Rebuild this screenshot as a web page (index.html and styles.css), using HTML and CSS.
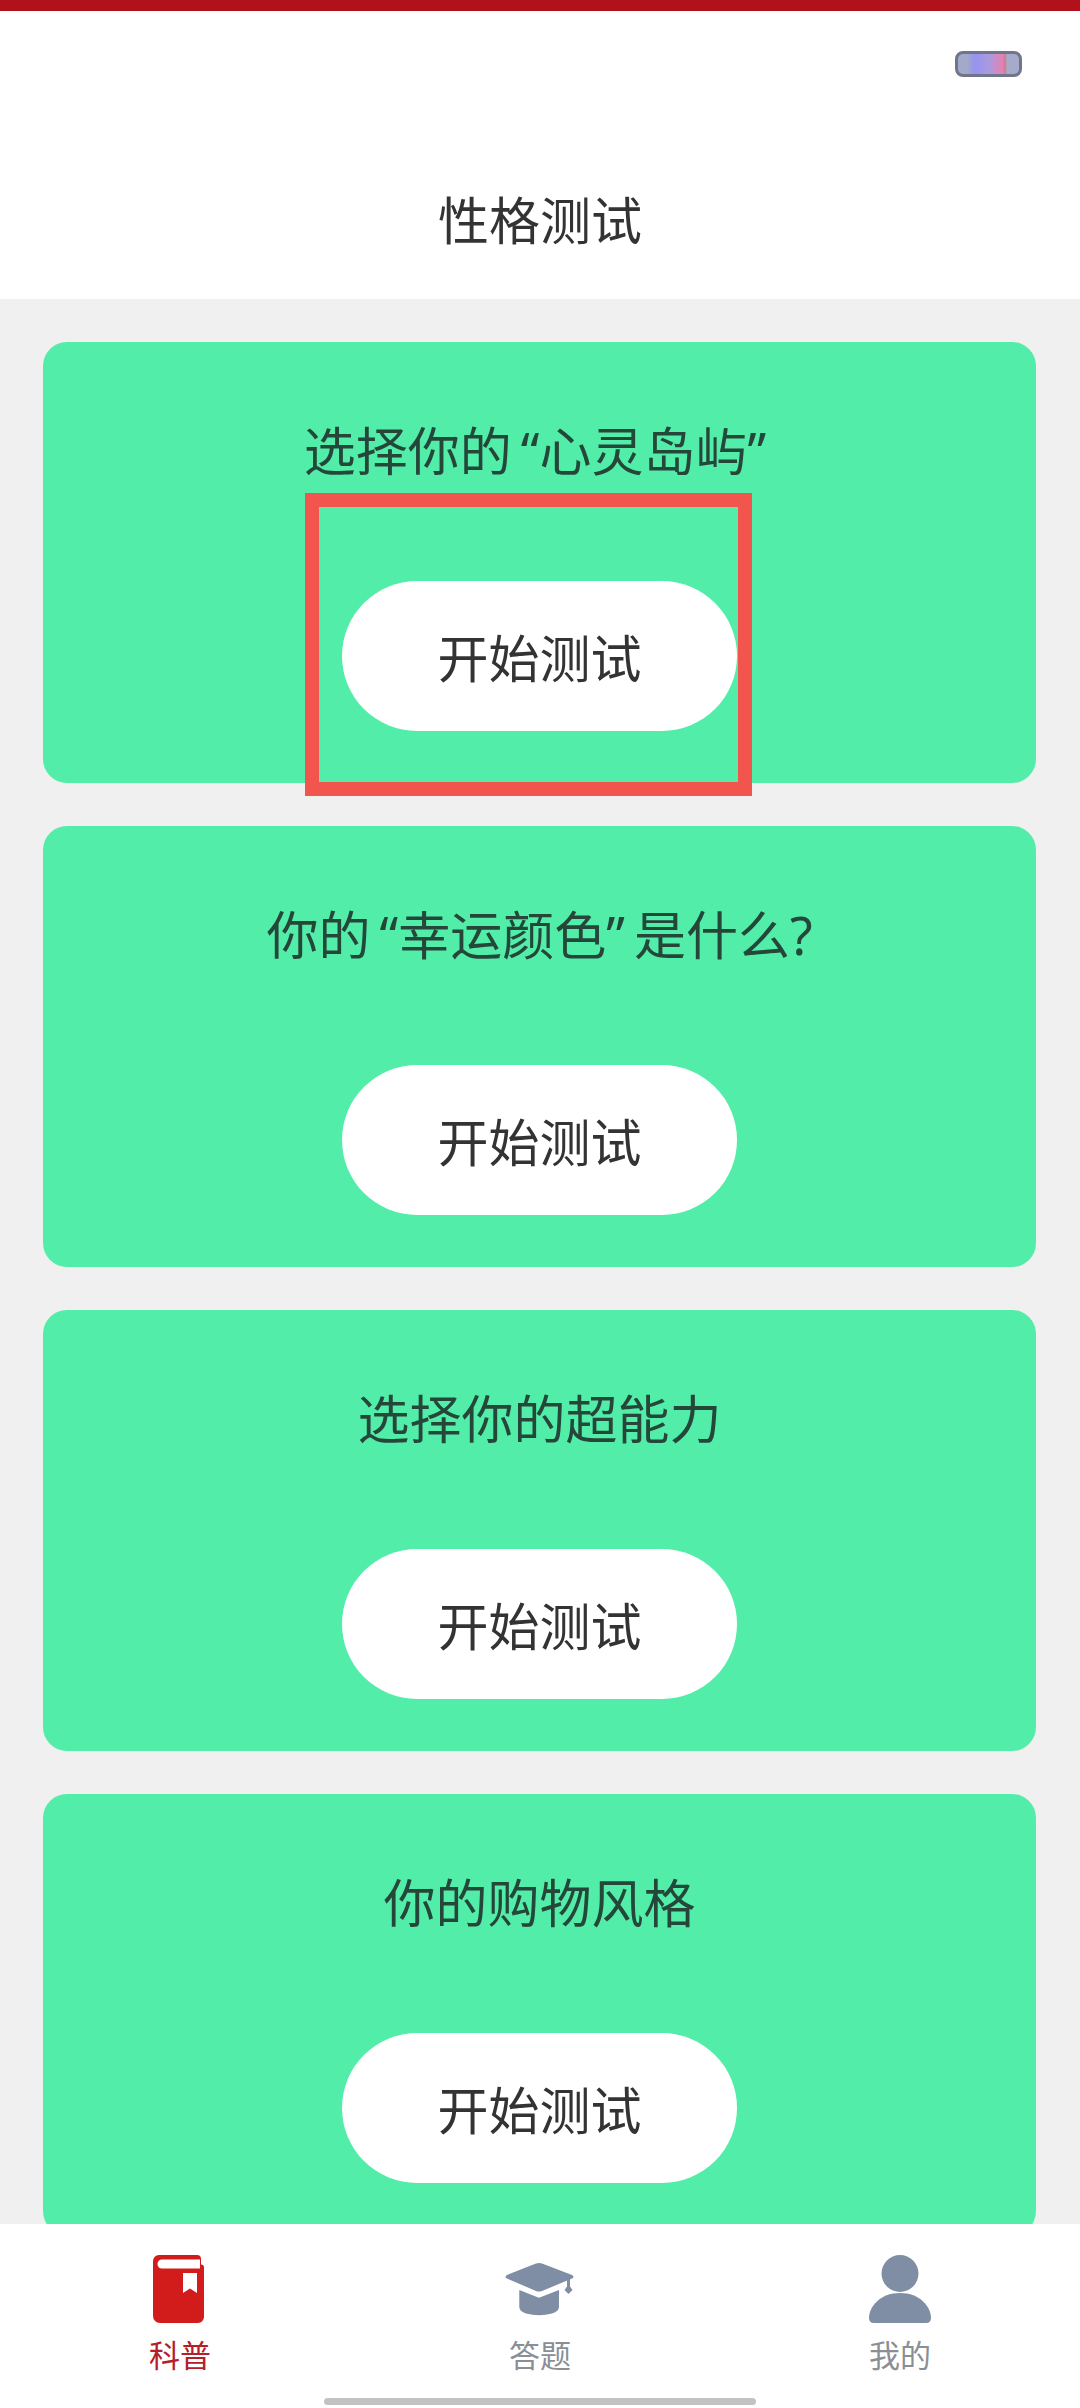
FILE: index.html
```html
<!DOCTYPE html>
<html lang="zh-CN">
<head>
<meta charset="utf-8">
<title>性格测试</title>
<link rel="stylesheet" href="styles.css">
</head>
<body>
<div class="app">
  <div class="status-strip"></div>
  <header class="header">
    <div class="pill"></div>
    <h1 class="header-title">性格测试</h1>
  </header>
  <main class="list">
    <section class="card">
      <h2 class="card-title">选择你的<span class="quoted">“心灵岛屿”</span></h2>
      <button class="start">开始测试</button>
      <div class="highlight"></div>
    </section>
    <section class="card">
      <h2 class="card-title">你的<span class="quoted">“幸运颜色”</span>是什么?</h2>
      <button class="start">开始测试</button>
    </section>
    <section class="card">
      <h2 class="card-title">选择你的超能力</h2>
      <button class="start">开始测试</button>
    </section>
    <section class="card">
      <h2 class="card-title">你的购物风格</h2>
      <button class="start">开始测试</button>
    </section>
  </main>
  <nav class="tabs">
    <div class="tab tab-active">
      <svg class="tab-icon" viewBox="0 0 80 68" aria-hidden="true">
        <path fill="#d21c1c" d="M19 0H57a4 4 0 0 1 4 4V9.500a3 3 0 0 1 3 3V62a6 6 0 0 1-6 6H20A7 7 0 0 1 13 61V6A6 6 0 0 1 19 0Z"/>
        <path fill="#fff" d="M22 4.500H60V13.500H22A4.500 4.500 0 0 1 22 4.500Z"/>
        <path fill="#fff" d="M43 18H57V38L50 33.500L43 38Z"/>
      </svg>
      <span class="tab-label">科普</span>
    </div>
    <div class="tab">
      <svg class="tab-icon" viewBox="0 0 80 68" aria-hidden="true">
        <path fill="#7f8ea4" d="M36 8.500Q39 7.500 42 8.500L72 20Q75 22 72 23.500L42 36Q39 37 36 36L7 23.500Q4 22 7 20Z"/>
        <path fill="#7f8ea4" d="M19.300 35L37 42Q39 43 41 42L59 35V52Q59 56 52 58.500Q39 62 26 58.500Q19.300 56 19.300 52Z"/>
        <path fill="#7f8ea4" d="M67 24H70V31.500L72.500 35L68.500 39L64.500 35L67 31.500Z"/>
      </svg>
      <span class="tab-label">答题</span>
    </div>
    <div class="tab">
      <svg class="tab-icon" viewBox="0 0 80 68" aria-hidden="true">
        <circle fill="#7f8ea4" cx="40" cy="18.500" r="18.500"/>
        <path fill="#7f8ea4" d="M40 38C60 38 71 52 71 63Q71 68 66 68H14Q9 68 9 63C9 52 20 38 40 38Z"/>
      </svg>
      <span class="tab-label">我的</span>
    </div>
    <div class="home-bar"></div>
  </nav>
</div>
</body>
</html>
```

FILE: styles.css
```css
* {
  box-sizing: border-box;
}

html,
body {
  margin: 0;
  height: 100%;
}

body {
  font-family: "Noto Sans", "Noto Sans CJK SC", sans-serif;
  color: #333;
  background: #f0f0f0;
}

.app {
  display: flex;
  flex-direction: column;
  height: 2408px;
  overflow: hidden;
}

.status-strip {
  flex: none;
  height: 11px;
  background: #b0111b;
}

.header {
  flex: none;
  position: relative;
  height: 288px;
  padding-top: 174px;
  background: #fff;
  text-align: center;
}

.pill {
  position: absolute;
  top: 40px;
  right: 58px;
  width: 67px;
  height: 26px;
  border: 3px solid #70758c;
  border-radius: 8px;
  background: linear-gradient(90deg, #a3a9c9 0%, #a3a9c9 14%, #9593ef 28%, #a89be0 50%, #e382b4 72%, #c9808f 78%, #a5abc8 80%, #a5abc8 100%);
  filter: blur(0.6px);
}

.header-title {
  margin: 0;
  font-size: 51px;
  font-weight: 400;
  line-height: 70px;
}

.list {
  flex: 1;
  min-height: 0;
  overflow: hidden;
  display: flex;
  flex-direction: column;
  gap: 43px;
  padding: 43px 44px 0 43px;
}

.card {
  flex: none;
  position: relative;
  display: flex;
  flex-direction: column;
  align-items: center;
  height: 441px;
  padding-top: 73px;
  border-radius: 24px;
  background: #52eda8;
}

.card-title {
  margin: 0;
  font-size: 52px;
  font-weight: 400;
  line-height: 72px;
  color: #24473a;
  white-space: nowrap;
}

.quoted {
  padding: 0 9px;
}

.start {
  margin-top: 94px;
  width: 395px;
  height: 150px;
  border: 0;
  border-radius: 75px;
  background: #fff;
  color: #333;
  font: inherit;
  font-size: 51px;
  padding: 0;
}

/* red frame drawn around the first card's button */
.highlight {
  position: absolute;
  left: 262px;
  top: 151px;
  width: 447px;
  height: 303px;
  border: 14px solid #f2554d;
}

.tabs {
  flex: none;
  position: relative;
  display: flex;
  height: 184px;
  background: #fff;
}

.tab {
  flex: 1;
  display: flex;
  flex-direction: column;
  align-items: center;
  padding-top: 31px;
  color: #8a8f96;
}

.tab-active {
  color: #b3202a;
}

.tab-icon {
  display: block;
  width: 80px;
  height: 68px;
}

.tab-label {
  margin-top: 11px;
  font-size: 31px;
  line-height: 42px;
}

.home-bar {
  position: absolute;
  left: 324px;
  bottom: 3px;
  width: 432px;
  height: 7px;
  border-radius: 4px;
  background: #c2c2c2;
}
```
